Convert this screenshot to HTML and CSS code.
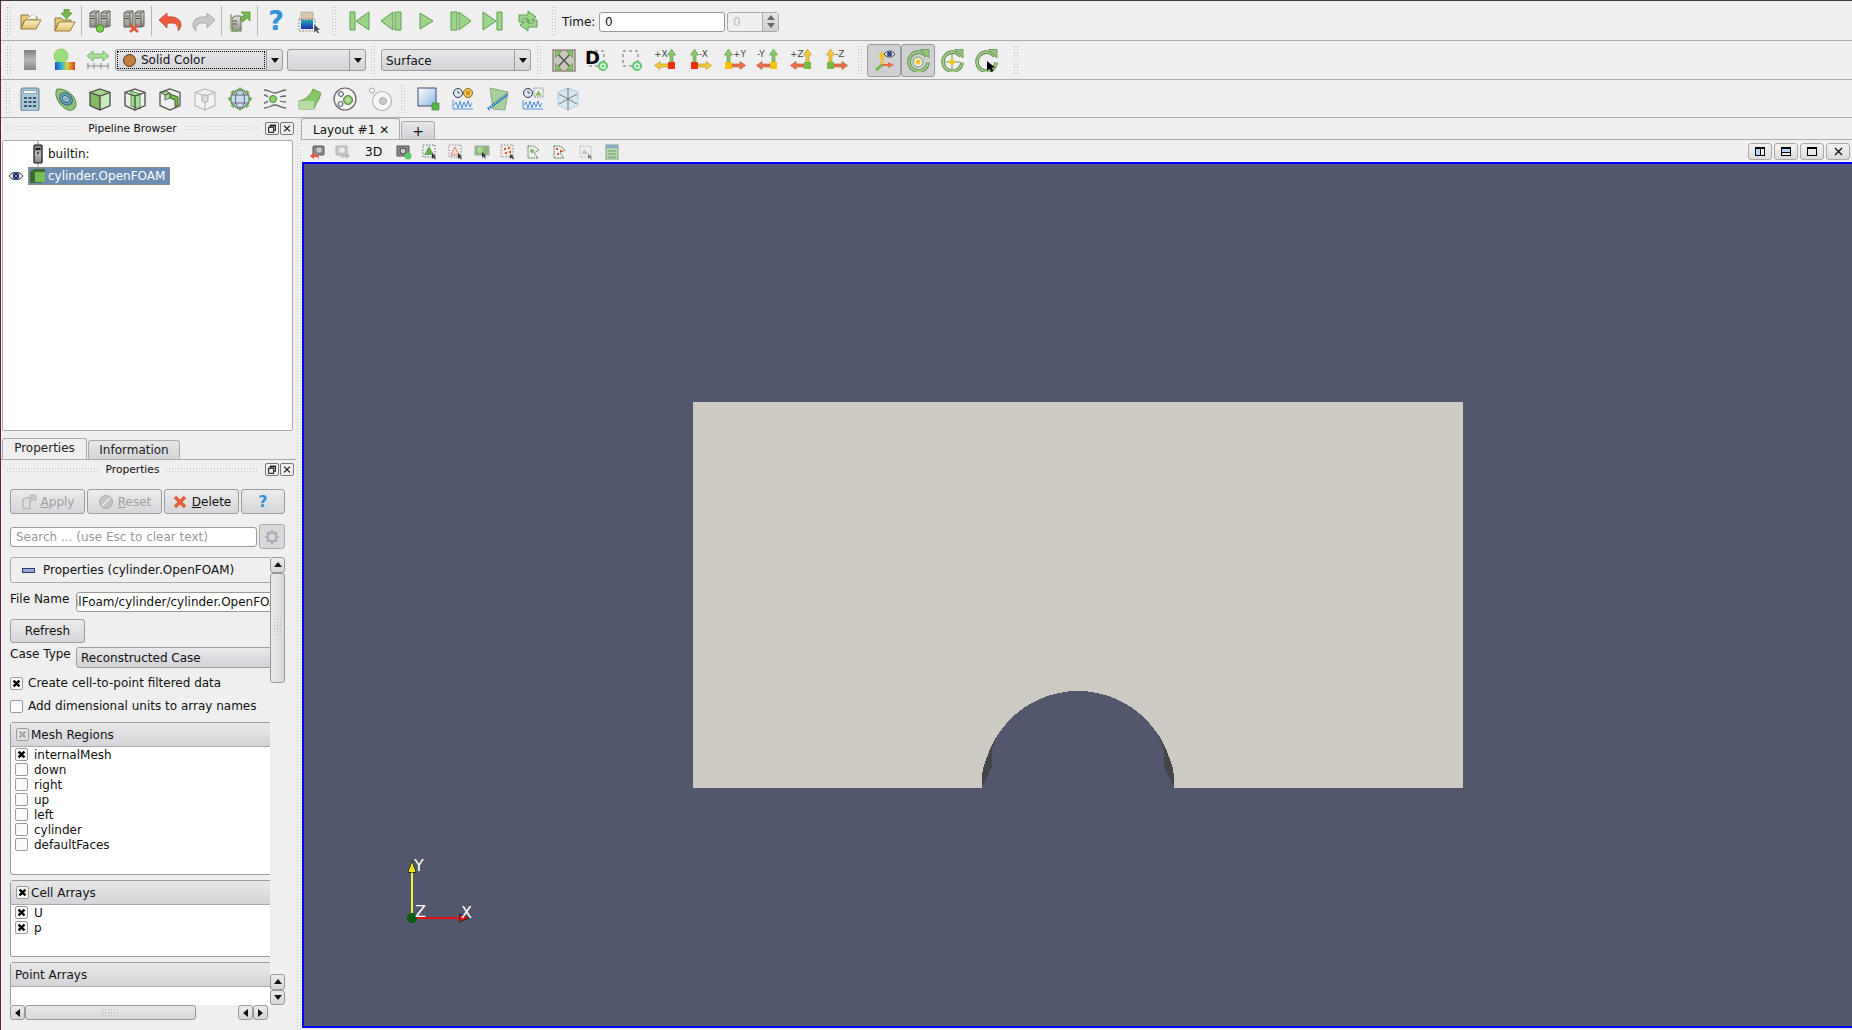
FILE: index.html
```html
<!DOCTYPE html>
<html lang="en">
<head>
  <meta charset="UTF-8">
  <title>ParaView</title>
  <link rel="stylesheet" href="styles.css">
</head>
<body>
<svg class="sprite" aria-hidden="true">
  <defs>
    <linearGradient id="gFolder" x1="0" y1="0" x2="0" y2="1"><stop offset="0" stop-color="#fdf0c4"/><stop offset="1" stop-color="#e6bf6a"/></linearGradient>
    <linearGradient id="gSrv" x1="0" y1="0" x2="0" y2="1"><stop offset="0" stop-color="#e4e4dc"/><stop offset="1" stop-color="#8f8f86"/></linearGradient>
    <linearGradient id="gSolid" x1="0" y1="0" x2="0" y2="1"><stop offset="0" stop-color="#808080"/><stop offset=".5" stop-color="#b8b8b8"/><stop offset="1" stop-color="#858585"/></linearGradient>
    <linearGradient id="gRain" x1="0" y1="0" x2="1" y2="0"><stop offset="0" stop-color="#2050c8"/><stop offset=".35" stop-color="#30b8d0"/><stop offset=".6" stop-color="#d8d040"/><stop offset="1" stop-color="#d84020"/></linearGradient>
    <linearGradient id="gCmap" x1="0" y1="0" x2="0" y2="1"><stop offset="0" stop-color="#20a8b0"/><stop offset="1" stop-color="#2030b0"/></linearGradient>
    <linearGradient id="gSel" x1="0" y1="0" x2="1" y2="1"><stop offset="0" stop-color="#ffffff"/><stop offset="1" stop-color="#8ab8e8"/></linearGradient>
    <radialGradient id="gBall"><stop offset="0" stop-color="#d8f0c8"/><stop offset="1" stop-color="#70b850"/></radialGradient>

    <symbol id="i-open" viewBox="0 0 24 24">
      <path d="M3 6h7l2 2h7v4H6l-3 8z" fill="#e6c678" stroke="#8a7440"/>
      <path d="M8 10l8-5 3 5z" fill="#fff" stroke="#aaa" stroke-width=".6"/>
      <path d="M3 20l4-9h16l-5 9z" fill="url(#gFolder)" stroke="#96803e"/>
    </symbol>
    <symbol id="i-load" viewBox="0 0 24 24">
      <path d="M3 9h6l2 2h8v3H6l-3 8z" fill="#e6c678" stroke="#8a7440"/>
      <path d="M3 22l4-9h16l-5 9z" fill="url(#gFolder)" stroke="#96803e"/>
      <path d="M12 0h5v4h3l-5.500 6L9 4h3z" fill="#78b850" stroke="#4e8a2a" stroke-width=".7"/>
    </symbol>
    <symbol id="i-servers" viewBox="0 0 24 24">
      <path d="M2 4l3-2h6v15l-3 1H2z" fill="url(#gSrv)" stroke="#5c5c54"/>
      <path d="M2 4h6l3-2M8 4v14" fill="none" stroke="#5c5c54"/>
      <path d="M13 4l3-2h6v15l-3 1h-6z" fill="url(#gSrv)" stroke="#5c5c54"/>
      <path d="M13 4h6l3-2M19 4v14" fill="none" stroke="#5c5c54"/>
      <path d="M3 7h4M3 9.500h4M14 7h4M14 9.500h4" stroke="#44443e" fill="none"/>
    </symbol>
    <symbol id="i-connect" viewBox="0 0 24 24">
      <use href="#i-servers"/>
      <circle cx="12" cy="19.500" r="3.800" fill="#7ccc50" stroke="#4c8a2c"/>
    </symbol>
    <symbol id="i-disconnect" viewBox="0 0 24 24">
      <use href="#i-servers"/>
      <path d="M8 16l8 7M16 16l-8 7" stroke="#e05a3a" stroke-width="2.600"/>
    </symbol>
    <symbol id="i-undo" viewBox="0 0 24 24">
      <path d="M1 11l8-7v4c8-1 14 2 14 8 0 2-1 4-3 6 1-5-2-8-6-8-2 0-3 0-5 1v4z" fill="#ee5a3e" stroke="#b84a30" stroke-width=".8"/>
    </symbol>
    <symbol id="i-redo" viewBox="0 0 24 24">
      <path d="M23 11l-8-7v4C7 7 1 10 1 16c0 2 1 4 3 6-1-5 2-8 6-8 2 0 3 0 5 1v4z" fill="#c8c8c8" stroke="#a0a0a0" stroke-width=".8"/>
    </symbol>
    <symbol id="i-srvgo" viewBox="0 0 24 24">
      <path d="M4 9l3-2h6v14l-3 1H4z" fill="url(#gSrv)" stroke="#66665e"/>
      <path d="M5 12h4M5 15h4" stroke="#55554e"/>
      <path d="M3 21V5M3 22h11" stroke="#86b070" stroke-width="1.500" fill="none"/>
      <path d="M13 3h9v9l-3-3-4 4-3-3 4-4z" fill="#78b850" stroke="#4e8a2a" stroke-width=".7"/>
    </symbol>
    <symbol id="i-cmap" viewBox="0 0 24 24">
      <rect x="3" y="3" width="12" height="8" fill="#d8c8b0" stroke="#a09080" stroke-width=".6"/>
      <rect x="3" y="11" width="12" height="9" fill="url(#gCmap)"/>
      <rect x="1" y="10" width="16" height="12" fill="none" stroke="#777" stroke-dasharray="1.500 1.500"/>
      <path d="M16 15v9l2-2 2 3 1.500-1-2-3h3z" fill="#445" stroke="#fff" stroke-width=".4"/>
    </symbol>

    <symbol id="i-first" viewBox="0 0 24 24">
      <path d="M4 3h5v18H4zM23 3v18L10 12z" fill="#9ed48a" stroke="#5a9e4a"/>
    </symbol>
    <symbol id="i-back" viewBox="0 0 24 24">
      <path d="M15 3h6v18h-6zM13 3v18L1 12z" fill="#9ed48a" stroke="#5a9e4a"/>
    </symbol>
    <symbol id="i-play" viewBox="0 0 24 24">
      <path d="M6 4l13 8-13 8z" fill="#9ed48a" stroke="#5a9e4a"/>
    </symbol>
    <symbol id="i-fwd" viewBox="0 0 24 24">
      <path d="M3 3h6v18H3zM11 3v18l12-9z" fill="#9ed48a" stroke="#5a9e4a"/>
    </symbol>
    <symbol id="i-last" viewBox="0 0 24 24">
      <path d="M20 3h-5v18h5zM1 3v18l13-9z" fill="#9ed48a" stroke="#5a9e4a"/>
    </symbol>
    <symbol id="i-loop" viewBox="0 0 24 24">
      <path d="M3 13V6h9V2l8 6-8 6v-4H7v3z" fill="#9ed48a" stroke="#5a9e4a"/>
      <path d="M21 11v7h-9v4l-8-6 8-6v4h5v-3z" fill="#9ed48a" stroke="#5a9e4a"/>
    </symbol>

    <symbol id="i-solid" viewBox="0 0 24 24">
      <rect x="6" y="2" width="12" height="20" fill="url(#gSolid)"/>
    </symbol>
    <symbol id="i-scalar" viewBox="0 0 24 24">
      <circle cx="9" cy="8" r="7" fill="#9ae07a" stroke="#78b858" stroke-width=".6"/>
      <rect x="3" y="14" width="20" height="8" fill="url(#gRain)"/>
    </symbol>
    <symbol id="i-rescale" viewBox="0 0 24 24">
      <path d="M1 8l6-5v3h10V3l6 5-6 5v-3H7v3z" fill="#a8e098" stroke="#6aa85a" stroke-width=".8"/>
      <path d="M1 18h22M2 15v6M8 15v6M15 15v6M22 15v6" stroke="#8a8a86" fill="none"/>
    </symbol>
    <symbol id="i-reset" viewBox="0 0 24 24">
      <rect x="1" y="2" width="22" height="21" fill="#c8c8bc" stroke="#8a8a80" stroke-width="1.500"/>
      <path d="M12 12.500L5 5M12 12.500L19 5M12 12.500L5 20M12 12.500L19 20" stroke="#555" stroke-width="1.500"/>
      <path d="M3.500 3.500h6l-6 6zM20.500 3.500h-6l6 6zM3.500 21.500h6l-6-6zM20.500 21.500h-6l6-6z" fill="#8cc860" stroke="#5a8a3a" stroke-width=".6"/>
    </symbol>
    <symbol id="i-zoomsel" viewBox="0 0 24 24">
      <rect x="3" y="3" width="15" height="15" fill="none" stroke="#666" stroke-dasharray="3 3"/>
      <circle cx="17" cy="18" r="5" fill="#5cc86c"/>
      <circle cx="17" cy="18" r="2.200" fill="none" stroke="#fff" stroke-width="1.200"/>
      <path d="M18.500 19.500l2 2" stroke="#fff"/>
    </symbol>
    <symbol id="i-zoomdata" viewBox="0 0 24 24">
      <use href="#i-zoomsel"/>
      <text x="-1" y="16" class="svg-d">D</text>
    </symbol>
    <symbol id="i-px" viewBox="0 0 24 24">
      <path d="M16 14V7h-2.500l4-6 4 6H19v7z" fill="#88c868" stroke="#5a9048" stroke-width=".6"/>
      <path d="M14 16H6v-2.500l-5.500 4 5.500 4V19h8z" fill="#f8c838" stroke="#b09030" stroke-width=".6"/>
      <rect x="14" y="14" width="7" height="7" fill="#ee3010"/>
      <text x="0" y="9" class="svg-ax">+X</text>
    </symbol>
    <symbol id="i-mx" viewBox="0 0 24 24">
      <path d="M5 14V7H2.500l4-6 4 6H8v7z" fill="#88c868" stroke="#5a9048" stroke-width=".6"/>
      <path d="M10 16h8v-2.500l5.500 4-5.500 4V19h-8z" fill="#f8c838" stroke="#b09030" stroke-width=".6"/>
      <rect x="3" y="14" width="7" height="7" fill="#ee3010"/>
      <text x="11" y="9" class="svg-ax">-X</text>
    </symbol>
    <symbol id="i-py" viewBox="0 0 24 24">
      <path d="M5 14V7H2.500l4-6 4 6H8v7z" fill="#88c868" stroke="#5a9048" stroke-width=".6"/>
      <path d="M10 16h8v-2.500l5.500 4-5.500 4V19h-8z" fill="#f07048" stroke="#b05030" stroke-width=".6"/>
      <rect x="3" y="14" width="7" height="7" fill="#f8c010"/>
      <text x="11" y="9" class="svg-ax">+Y</text>
    </symbol>
    <symbol id="i-my" viewBox="0 0 24 24">
      <path d="M16 14V7h-2.500l4-6 4 6H19v7z" fill="#88c868" stroke="#5a9048" stroke-width=".6"/>
      <path d="M14 16H6v-2.500l-5.500 4 5.500 4V19h8z" fill="#f07048" stroke="#b05030" stroke-width=".6"/>
      <rect x="14" y="14" width="7" height="7" fill="#f8c010"/>
      <text x="1" y="9" class="svg-ax">-Y</text>
    </symbol>
    <symbol id="i-pz" viewBox="0 0 24 24">
      <path d="M16 14V7h-2.500l4-6 4 6H19v7z" fill="#f8c838" stroke="#b09030" stroke-width=".6"/>
      <path d="M14 16H6v-2.500l-5.500 4 5.500 4V19h8z" fill="#f07048" stroke="#b05030" stroke-width=".6"/>
      <rect x="14" y="14" width="7" height="7" fill="#7cb848"/>
      <text x="0" y="9" class="svg-ax">+Z</text>
    </symbol>
    <symbol id="i-mz" viewBox="0 0 24 24">
      <path d="M5 14V7H2.500l4-6 4 6H8v7z" fill="#f8c838" stroke="#b09030" stroke-width=".6"/>
      <path d="M10 16h8v-2.500l5.500 4-5.500 4V19h-8z" fill="#f07048" stroke="#b05030" stroke-width=".6"/>
      <rect x="3" y="14" width="7" height="7" fill="#7cb848"/>
      <text x="11" y="9" class="svg-ax">-Z</text>
    </symbol>
    <symbol id="i-orient" viewBox="0 0 24 24">
      <path d="M10 17V8" stroke="#f0c030" stroke-width="3"/>
      <path d="M6 9l4-6 4 6z" fill="#f0c030"/>
      <path d="M10 17h7" stroke="#ee6a44" stroke-width="2"/>
      <path d="M16 14l6 3-6 3z" fill="#ee6a44"/>
      <path d="M10 17l-6 5" stroke="#78b850" stroke-width="3"/>
      <path d="M12 6c3-4 8-4 11 0-3 4-8 4-11 0z" fill="#dde" stroke="#445"/>
      <circle cx="17.500" cy="6" r="2.500" fill="#334a78"/>
    </symbol>
    <symbol id="i-ring" viewBox="0 0 24 24">
      <path d="M20.500 8.500a9.500 9.500 0 1 0 1.500 6" fill="none" stroke="#5f8a4a" stroke-width="3.600"/>
      <path d="M20.500 8.500a9.500 9.500 0 1 0 1.500 6" fill="none" stroke="#a4d08c" stroke-width="1.800"/>
      <path d="M14.500 1.500l8.500 0 0 8.500z" fill="#94c47c" stroke="#5a8a48" stroke-width=".7"/>
    </symbol>
    <symbol id="i-center" viewBox="0 0 24 24">
      <use href="#i-ring"/>
      <circle cx="12" cy="14" r="5" fill="#e8ece0" stroke="#7a9a68"/>
      <circle cx="12" cy="14" r="2.500" fill="#f8c820"/>
    </symbol>
    <symbol id="i-pick" viewBox="0 0 24 24">
      <use href="#i-ring"/>
      <path d="M12 6v16M4 14h16" stroke="#7a9a68"/>
      <circle cx="12" cy="14" r="2.800" fill="#f8c820"/>
    </symbol>
    <symbol id="i-rotate" viewBox="0 0 24 24">
      <use href="#i-ring"/>
      <path d="M13 13v10l2.500-2.500 2 3.500 2-1-2-3.500H21z" fill="#000"/>
    </symbol>

    <symbol id="i-calc" viewBox="0 0 24 24">
      <rect x="3" y="1" width="18" height="23" rx="2" fill="#a8c8d8" stroke="#5a7a90"/>
      <rect x="5.500" y="3.500" width="13" height="3" fill="#eef4f8" stroke="#6a8a98" stroke-width=".6"/>
      <path d="M6 10h3v2H6zM10.500 10h3v2h-3zM15 10h3v2h-3zM6 14h3v2H6zM10.500 14h3v2h-3zM15 14h3v2h-3zM6 18h3v2H6zM10.500 18h3v2h-3zM15 18h3v2h-3z" fill="#39566a"/>
    </symbol>
    <symbol id="i-contour" viewBox="0 0 24 24">
      <path d="M4 2c8-1 19 6 19 15 0 6-5 7-8 6C7 20 0 9 4 2z" fill="#8cc474" stroke="#5a8a48"/>
      <ellipse cx="13" cy="12" rx="7" ry="5.500" transform="rotate(40 13 12)" fill="#6aa4bc" stroke="#3a6478"/>
      <ellipse cx="13" cy="12" rx="4" ry="2.800" transform="rotate(40 13 12)" fill="#a8cce0" stroke="#3a6478"/>
      <ellipse cx="13" cy="12" rx="1.800" ry="1.100" transform="rotate(40 13 12)" fill="#6aa4bc"/>
    </symbol>
    <symbol id="i-wire" viewBox="0 0 24 24">
      <path d="M12 2l10 3.500v13L12 23 2 18.500v-13zM2 5.500L12 9l10-3.500M12 9v14" fill="none" stroke="#4a4a44" stroke-width="1.300"/>
    </symbol>
    <symbol id="i-clip" viewBox="0 0 24 24">
      <path d="M2 5.500L12 9v14L2 18.500z" fill="#84b864"/>
      <path d="M12 9l10-3.500v13L12 23z" fill="#c8ecc0"/>
      <path d="M12 2l10 3.500L12 9 2 5.500z" fill="#a4d48c"/>
      <use href="#i-wire"/>
    </symbol>
    <symbol id="i-slice" viewBox="0 0 24 24">
      <path d="M8 4l9 3v15l-9-3z" fill="#a4e094" stroke="#5a9a48"/>
      <use href="#i-wire"/>
    </symbol>
    <symbol id="i-extract" viewBox="0 0 24 24">
      <path d="M12 2l10 3.500v13L12 23 2 18.500v-13z" fill="none" stroke="#4a4a44" stroke-width="1.200"/>
      <path d="M12 7l8 3v8l-3 1.500V13l-5-2z" fill="#78b850" stroke="#3a6a28"/>
      <path d="M3 6l5-2 4 2-5 2zM7 8v5l5-2V6z" fill="#a8d890" stroke="#444" stroke-width=".7"/>
    </symbol>
    <symbol id="i-thresh" viewBox="0 0 24 24">
      <path d="M12 2l10 3.500v13L12 23 2 18.500v-13zM2 5.500L12 9l10-3.500M12 9v14" fill="#f2f2f2" stroke="#bbb" stroke-width="1.200"/>
      <path d="M9 9l3-1.500L15 9v5l-3 1.500L9 14z" fill="#ddd" stroke="#aaa"/>
    </symbol>
    <symbol id="i-glyph" viewBox="0 0 24 24">
      <circle cx="12" cy="12" r="9.500" fill="#c4dcec" stroke="#556"/>
      <ellipse cx="12" cy="12" rx="4.500" ry="9.500" fill="none" stroke="#667"/>
      <path d="M3 8h18M3 16h18" stroke="#667" fill="none"/>
      <path d="M12 0.500l2 2-2 2-2-2zM12 19.500l2 2-2 2-2-2zM2 10l2 2-2 2-2-2zM22 10l2 2-2 2-2-2zM5 3.500l2 2-2 2-2-2zM19 3.500l2 2-2 2-2-2zM5 16.500l2 2-2 2-2-2zM19 16.500l2 2-2 2-2-2z" fill="#78b850" stroke="#4a7a30" stroke-width=".5"/>
    </symbol>
    <symbol id="i-stream" viewBox="0 0 24 24">
      <path d="M1 3c6 0 7 3 11 3s6-3 11-3M1 21c6 0 7-3 11-3s6 3 11 3M1 8c2 0 3 1 4 2M1 16c2 0 3-1 4-2M17 10c2-1 3-1 6-1M17 14c2 1 3 1 6 1" fill="none" stroke="#666" stroke-width="1.300"/>
      <circle cx="10" cy="12" r="3.500" fill="#8cd46c" stroke="#4a8a30"/>
    </symbol>
    <symbol id="i-warp" viewBox="0 0 24 24">
      <path d="M1 14c6-1 11-5 14-12l8 4c-2 8-5 10-7 16H1z" fill="#88c868" stroke="#6aa04e"/>
      <path d="M1 14h15v8H1z" fill="#b8dca4"/>
    </symbol>
    <symbol id="i-group" viewBox="0 0 24 24">
      <circle cx="12" cy="12" r="11" fill="#f4f4f0" stroke="#666" stroke-width="1.200"/>
      <circle cx="15" cy="13" r="4.500" fill="url(#gBall)" stroke="#4a8a30"/>
      <circle cx="8" cy="7" r="2.500" fill="#e0e8f0" stroke="#556"/>
      <circle cx="7.500" cy="17" r="2.500" fill="#e0e8f0" stroke="#556"/>
    </symbol>
    <symbol id="i-groupoff" viewBox="0 0 24 24">
      <circle cx="14" cy="14" r="9.500" fill="#f6f6f6" stroke="#b8b8b8" stroke-width="1.200"/>
      <circle cx="15" cy="14" r="3.500" fill="#ccc" stroke="#aaa"/>
      <circle cx="4" cy="3.500" r="2.500" fill="#f6f6f6" stroke="#aaa"/>
    </symbol>
    <symbol id="i-selplot" viewBox="0 0 24 24">
      <rect x="2" y="1" width="18" height="18" fill="url(#gSel)" stroke="#446"/>
      <rect x="16" y="16" width="7" height="7" fill="#5cb04c" stroke="#3e8a30" stroke-dasharray="1.500 .8"/>
    </symbol>
    <symbol id="i-wave" viewBox="0 0 24 24">
      <path d="M2 13v9h20M3 18l2-3 2 6 2-7 2 7 2-6 2 5 2-6 2 6 2-4" fill="none" stroke="#4a90d8" stroke-width="1"/>
    </symbol>
    <symbol id="i-qplot" viewBox="0 0 24 24">
      <use href="#i-wave"/>
      <circle cx="7" cy="6" r="4.500" fill="#dce8f4" stroke="#334"/>
      <path d="M7 3.500V6h2" stroke="#334" fill="none" stroke-width=".8"/>
      <circle cx="17" cy="6" r="4.500" fill="#f4c850" stroke="#8a6a20"/>
      <rect x="15" y="4" width="4" height="4" fill="#d09020"/>
    </symbol>
    <symbol id="i-lineplot" viewBox="0 0 24 24">
      <path d="M4 1l18 4-3 18L7 22z" fill="#a8d09c" stroke="#88a888"/>
      <path d="M2 22L22 7" stroke="#2070d0" stroke-width="3" stroke-dasharray="1.500 1"/>
    </symbol>
    <symbol id="i-tplot" viewBox="0 0 24 24">
      <use href="#i-wave"/>
      <circle cx="7" cy="6" r="4.500" fill="#dce8f4" stroke="#334"/>
      <path d="M7 3.500V6h2" stroke="#334" fill="none" stroke-width=".8"/>
      <rect x="13" y="1" width="9" height="9" fill="none" stroke="#888" stroke-dasharray="1.500 1"/>
      <path d="M14.500 8.500l3-5 3 5z" fill="#78b850"/>
    </symbol>
    <symbol id="i-cube" viewBox="0 0 24 24">
      <path d="M12 1l10 4v13l-10 5-10-5V5z" fill="#d4e8f4" stroke="#b4c8d8"/>
      <path d="M12 1v22M3 7l18 10M21 7L3 17" stroke="#7a7a72"/>
    </symbol>

    <symbol id="i-eye" viewBox="0 0 16 12">
      <path d="M1 6c3-5 11-5 14 0-3 5-11 5-14 0z" fill="#e4e4ec" stroke="#334"/>
      <circle cx="8" cy="6" r="3.200" fill="#24386c"/>
      <circle cx="8" cy="6" r="1.200" fill="#889"/>
    </symbol>
    <symbol id="i-builtin" viewBox="0 0 20 27">
      <path d="M10 0v27" stroke="#888"/>
      <rect x="6" y="4" width="8" height="18" rx="1" fill="url(#gSolid)" stroke="#111" stroke-width="1.200"/>
      <path d="M7.500 7h5v2h-5z" fill="#222"/>
      <circle cx="10" cy="12" r="1" fill="#222"/>
    </symbol>
    <symbol id="i-source" viewBox="0 0 18 18">
      <path d="M1 5l4-3h11v11l-4 3H1z" fill="#3e6a32"/>
      <rect x="6" y="5" width="10" height="10" fill="#72c050"/>
    </symbol>
    <symbol id="i-float" viewBox="0 0 13 13">
      <rect x="4.500" y="2.500" width="6" height="6" fill="none" stroke="#111" stroke-width="1.200"/>
      <rect x="2.500" y="5" width="6" height="6" fill="#eee" stroke="#111" stroke-width="1.200"/>
      <path d="M4.500 2.500h6v1.500h-6z" fill="#111"/>
    </symbol>
    <symbol id="i-close" viewBox="0 0 13 13">
      <path d="M3 3l7 7M10 3l-7 7" stroke="#111" stroke-width="1.300"/>
    </symbol>
    <symbol id="i-x" viewBox="0 0 13 13">
      <path d="M3 3l7 7M10 3l-7 7" stroke="#000" stroke-width="2.800"/>
    </symbol>
    <symbol id="i-apply" viewBox="0 0 16 16">
      <path d="M2 5l7-2v12l-7-1z" fill="#ddd" stroke="#aaa"/>
      <path d="M9 1h6v6l-2-2-3 3-2-2 3-3z" fill="#ccc" stroke="#aaa" stroke-width=".6"/>
    </symbol>
    <symbol id="i-reset2" viewBox="0 0 16 16">
      <circle cx="8" cy="8" r="6.500" fill="#c4c4c4" stroke="#aaa"/>
      <path d="M4 12l8-8" stroke="#e8e8e8" stroke-width="1.500"/>
    </symbol>
    <symbol id="i-del" viewBox="0 0 16 16">
      <path d="M3 3l10 10M13 3L3 13" stroke="#e0603c" stroke-width="3.600"/>
    </symbol>
    <symbol id="i-gear" viewBox="0 0 16 16">
      <circle cx="8" cy="8" r="4.500" fill="none" stroke="#a8b0b8" stroke-width="2.400"/>
      <path d="M8 1v3M8 12v3M1 8h3M12 8h3M3 3l2 2M11 11l2 2M13 3l-2 2M5 11l-2 2" stroke="#a8b0b8" stroke-width="2"/>
    </symbol>

    <symbol id="v-undo" viewBox="0 0 16 16">
      <rect x="4" y="2" width="11" height="9" rx="1" fill="#889" stroke="#555"/>
      <circle cx="10" cy="6" r="2.500" fill="#ccc"/>
      <path d="M1 12l4-4v2c4 0 5 2 5 5-1-2-3-2-5-2v2z" fill="#e05a3c"/>
    </symbol>
    <symbol id="v-redo" viewBox="0 0 16 16">
      <rect x="1" y="2" width="11" height="9" rx="1" fill="#ccc" stroke="#aaa"/>
      <circle cx="7" cy="6" r="2.500" fill="#eee"/>
      <path d="M15 12l-4-4v2c-4 0-5 2-5 5 1-2 3-2 5-2v2z" fill="#bbb"/>
    </symbol>
    <symbol id="v-shot" viewBox="0 0 16 16">
      <rect x="1" y="2" width="12" height="10" fill="#8a8a82" stroke="#555"/>
      <circle cx="7" cy="7" r="3" fill="#ccc" stroke="#444"/>
      <circle cx="12" cy="12" r="3.500" fill="#5cc86c"/>
    </symbol>
    <symbol id="v-tri" viewBox="0 0 16 16">
      <rect x="1" y="1" width="12" height="12" fill="none" stroke="#666" stroke-dasharray="1.500 1.500"/>
      <path d="M7 2l5 9H2z" fill="#6aa850"/>
      <path d="M10 9v6l1.500-1.500 1.500 2 1-.8-1.500-2H14z" fill="#333"/>
    </symbol>
    <symbol id="v-trired" viewBox="0 0 16 16">
      <rect x="1" y="1" width="12" height="12" fill="none" stroke="#888" stroke-dasharray="1.500 1.500"/>
      <path d="M7 3l4 8H3z" fill="#f4e4d8" stroke="#e06040" stroke-width=".8"/>
      <path d="M10 9v6l1.500-1.500 1.500 2 1-.8-1.500-2H14z" fill="#333"/>
    </symbol>
    <symbol id="v-surf" viewBox="0 0 16 16">
      <rect x="1" y="2" width="14" height="9" fill="#8aba78" stroke="#aaa"/>
      <circle cx="6" cy="6" r="3" fill="#a8d898"/>
      <path d="M8 8v6l1.500-1.500 1.500 2 1-.8-1.500-2H12z" fill="#333"/>
    </symbol>
    <symbol id="v-pts" viewBox="0 0 16 16">
      <rect x="1" y="1" width="12" height="12" fill="#f0e8e0" stroke="#888" stroke-dasharray="1.500 1.500"/>
      <path d="M4 4h2v2H4zM8 3h2v2H8zM5 8h2v2H5zM9 7h2v2H9z" fill="#e05030"/>
      <path d="M10 10v5l1.500-1.500 1.500 2 1-.8-1.500-2H14z" fill="#333"/>
    </symbol>
    <symbol id="v-poly" viewBox="0 0 16 16">
      <path d="M2 2h6l5 4-5 3 4 5H2z" fill="#eee" stroke="#3a6a30" stroke-dasharray="1.500 1"/>
      <circle cx="6" cy="7" r="2" fill="#7ab858"/>
    </symbol>
    <symbol id="v-polyred" viewBox="0 0 16 16">
      <path d="M2 2h6l5 4-5 3 4 5H2z" fill="#eee" stroke="#3a6a30" stroke-dasharray="1.500 1"/>
      <path d="M4 4h2v2H4zM8 6h2v2H8zM5 9h2v2H5z" fill="#e05030"/>
    </symbol>
    <symbol id="v-gray" viewBox="0 0 16 16">
      <rect x="2" y="2" width="11" height="11" fill="#eee" stroke="#aaa" stroke-dasharray="1.500 1.500"/>
      <path d="M6 5l4 5H4z" fill="#b8c8b0"/>
      <path d="M10 10v5l1.500-1.500 1.500 2 1-.8-1.500-2H14z" fill="#777"/>
    </symbol>
    <symbol id="v-table" viewBox="0 0 16 16">
      <rect x="2" y="1" width="12" height="14" fill="#b8dcb0" stroke="#8a9a8a"/>
      <path d="M2 1h12v3H2z" fill="#88aac0"/>
      <path d="M4 7h8M4 10h8M4 13h8" stroke="#6a9a60"/>
    </symbol>
  </defs>
</svg>

<div class="app">
  <div class="bar bar-1">
    <span class="grip grip-first"></span>
    <span class="tb"><svg class="ic"><use href="#i-open"/></svg></span>
    <span class="tb"><svg class="ic"><use href="#i-load"/></svg></span>
    <span class="sep"></span>
    <span class="tb"><svg class="ic"><use href="#i-connect"/></svg></span>
    <span class="tb"><svg class="ic"><use href="#i-disconnect"/></svg></span>
    <span class="sep"></span>
    <span class="tb"><svg class="ic"><use href="#i-undo"/></svg></span>
    <span class="tb"><svg class="ic"><use href="#i-redo"/></svg></span>
    <span class="sep"></span>
    <span class="tb"><svg class="ic"><use href="#i-srvgo"/></svg></span>
    <span class="sep"></span>
    <span class="tb"><span class="help-glyph">?</span></span>
    <span class="tb"><svg class="ic"><use href="#i-cmap"/></svg></span>
    <span class="grip grip-mid"></span>
    <span class="tb"><svg class="ic"><use href="#i-first"/></svg></span>
    <span class="tb"><svg class="ic"><use href="#i-back"/></svg></span>
    <span class="tb"><svg class="ic"><use href="#i-play"/></svg></span>
    <span class="tb"><svg class="ic"><use href="#i-fwd"/></svg></span>
    <span class="tb"><svg class="ic"><use href="#i-last"/></svg></span>
    <span class="tb"><svg class="ic"><use href="#i-loop"/></svg></span>
    <span class="grip grip-time"></span>
    <span class="time-label">Time:</span>
    <span class="field time-field">0</span>
    <span class="spin">
      <span class="spin-value">0</span>
      <span class="spin-arrows"><i class="tri-up"></i><i class="tri-down"></i></span>
    </span>
  </div>

  <div class="bar bar-2">
    <span class="grip grip-first"></span>
    <span class="tb"><svg class="ic"><use href="#i-solid"/></svg></span>
    <span class="tb"><svg class="ic"><use href="#i-scalar"/></svg></span>
    <span class="tb"><svg class="ic"><use href="#i-rescale"/></svg></span>
    <span class="combo combo-color">
      <span class="combo-text focus"><i class="swatch"></i>Solid Color</span>
      <span class="combo-arrow"><i class="tri-down dark"></i></span>
    </span>
    <span class="combo combo-comp">
      <span class="combo-text"></span>
      <span class="combo-arrow"><i class="tri-down dark"></i></span>
    </span>
    <span class="grip grip-combo"></span>
    <span class="combo combo-rep">
      <span class="combo-text">Surface</span>
      <span class="combo-arrow"><i class="tri-down dark"></i></span>
    </span>
    <span class="grip grip-cam"></span>
    <span class="tb"><svg class="ic"><use href="#i-reset"/></svg></span>
    <span class="tb"><svg class="ic"><use href="#i-zoomdata"/></svg></span>
    <span class="tb"><svg class="ic"><use href="#i-zoomsel"/></svg></span>
    <span class="tb"><svg class="ic"><use href="#i-px"/></svg></span>
    <span class="tb"><svg class="ic"><use href="#i-mx"/></svg></span>
    <span class="tb"><svg class="ic"><use href="#i-py"/></svg></span>
    <span class="tb"><svg class="ic"><use href="#i-my"/></svg></span>
    <span class="tb"><svg class="ic"><use href="#i-pz"/></svg></span>
    <span class="tb"><svg class="ic"><use href="#i-mz"/></svg></span>
    <span class="grip grip-tog"></span>
    <span class="tb on"><svg class="ic"><use href="#i-orient"/></svg></span>
    <span class="tb on"><svg class="ic"><use href="#i-center"/></svg></span>
    <span class="tb"><svg class="ic"><use href="#i-pick"/></svg></span>
    <span class="tb"><svg class="ic"><use href="#i-rotate"/></svg></span>
    <span class="grip grip-end"></span>
  </div>

  <div class="bar bar-3">
    <span class="grip grip-first"></span>
    <span class="tb"><svg class="ic"><use href="#i-calc"/></svg></span>
    <span class="tb"><svg class="ic"><use href="#i-contour"/></svg></span>
    <span class="tb"><svg class="ic"><use href="#i-clip"/></svg></span>
    <span class="tb"><svg class="ic"><use href="#i-slice"/></svg></span>
    <span class="tb"><svg class="ic"><use href="#i-extract"/></svg></span>
    <span class="tb"><svg class="ic"><use href="#i-thresh"/></svg></span>
    <span class="tb"><svg class="ic"><use href="#i-glyph"/></svg></span>
    <span class="tb"><svg class="ic"><use href="#i-stream"/></svg></span>
    <span class="tb"><svg class="ic"><use href="#i-warp"/></svg></span>
    <span class="tb"><svg class="ic"><use href="#i-group"/></svg></span>
    <span class="tb"><svg class="ic"><use href="#i-groupoff"/></svg></span>
    <span class="grip grip-mid"></span>
    <span class="tb"><svg class="ic"><use href="#i-selplot"/></svg></span>
    <span class="tb"><svg class="ic"><use href="#i-qplot"/></svg></span>
    <span class="tb"><svg class="ic"><use href="#i-lineplot"/></svg></span>
    <span class="tb"><svg class="ic"><use href="#i-tplot"/></svg></span>
    <span class="tb"><svg class="ic"><use href="#i-cube"/></svg></span>
  </div>

  <div class="main">
    <div class="left">
      <div class="dock-title">
        <span class="title-grip"></span>
        <span class="title-text">Pipeline Browser</span>
        <span class="title-grip"></span>
        <span class="mini"><svg><use href="#i-float"/></svg></span>
        <span class="mini"><svg><use href="#i-close"/></svg></span>
      </div>
      <div class="tree">
        <div class="tree-row">
          <span class="eye-slot"></span>
          <svg class="tree-server"><use href="#i-builtin"/></svg>
          <span>builtin:</span>
        </div>
        <div class="tree-row tree-row-source">
          <span class="eye-slot"><svg class="eye"><use href="#i-eye"/></svg></span>
          <span class="selected"><svg class="source-ic"><use href="#i-source"/></svg>cylinder.OpenFOAM</span>
        </div>
      </div>
      <div class="split-h"></div>
      <div class="tabs">
        <span class="tab tab-on">Properties</span>
        <span class="tab">Information</span>
      </div>
      <div class="dock-title dock-title-props">
        <span class="title-grip"></span>
        <span class="title-text">Properties</span>
        <span class="title-grip"></span>
        <span class="mini"><svg><use href="#i-float"/></svg></span>
        <span class="mini"><svg><use href="#i-close"/></svg></span>
      </div>
      <div class="props">
        <div class="action-row">
          <span class="btn btn-wide off"><svg><use href="#i-apply"/></svg><span><u>A</u>pply</span></span>
          <span class="btn btn-wide off"><svg><use href="#i-reset2"/></svg><span><u>R</u>eset</span></span>
          <span class="btn btn-wide"><svg><use href="#i-del"/></svg><span><u>D</u>elete</span></span>
          <span class="btn btn-help"><span class="help-small">?</span></span>
        </div>
        <div class="search-row">
          <span class="field search">Search ... (use Esc to clear text)</span>
          <span class="gear"><svg><use href="#i-gear"/></svg></span>
        </div>
        <div class="scroll-wrap">
          <div class="scroll-body">
            <div class="prop-head"><i class="dash"></i>Properties (cylinder.OpenFOAM)</div>
            <div class="prop-row prop-file">
              <span class="prop-label">File Name</span>
              <span class="field file-field"><span class="file-text">ilFoam/cylinder/cylinder.OpenFOAM</span></span>
            </div>
            <span class="btn btn-refresh">Refresh</span>
            <div class="prop-row prop-case">
              <span class="prop-label">Case Type</span>
              <span class="combo combo-case"><span class="combo-text">Reconstructed Case</span></span>
            </div>
            <div class="check-row check-a"><span class="cb"><svg><use href="#i-x"/></svg></span>Create cell-to-point filtered data</div>
            <div class="check-row check-b"><span class="cb"></span>Add dimensional units to array names</div>

            <div class="group group-mesh">
              <div class="group-head"><span class="cb cb-gray"><svg><use href="#i-x"/></svg></span>Mesh Regions</div>
              <div class="item"><span class="cb"><svg><use href="#i-x"/></svg></span>internalMesh</div>
              <div class="item"><span class="cb"></span>down</div>
              <div class="item"><span class="cb"></span>right</div>
              <div class="item"><span class="cb"></span>up</div>
              <div class="item"><span class="cb"></span>left</div>
              <div class="item"><span class="cb"></span>cylinder</div>
              <div class="item"><span class="cb"></span>defaultFaces</div>
            </div>
            <div class="group group-cell">
              <div class="group-head"><span class="cb"><svg><use href="#i-x"/></svg></span>Cell Arrays</div>
              <div class="item"><span class="cb"><svg><use href="#i-x"/></svg></span>U</div>
              <div class="item"><span class="cb"><svg><use href="#i-x"/></svg></span>p</div>
            </div>
            <div class="group group-point">
              <div class="group-head group-head-plain">Point Arrays</div>
            </div>
          </div>
          <div class="vscroll">
            <span class="sb-btn"><i class="tri-up dark"></i></span>
            <span class="sb-thumb"><i class="sb-dots"></i></span>
            <span class="sb-track"></span>
            <span class="sb-btn"><i class="tri-up dark"></i></span>
            <span class="sb-btn"><i class="tri-down dark"></i></span>
          </div>
        </div>
        <div class="hscroll">
          <span class="sb-btn"><i class="tri-left"></i></span>
          <span class="sb-thumb-h"><i class="sb-dots sb-dots-h"></i></span>
          <span class="sb-track"></span>
          <span class="sb-btn"><i class="tri-left"></i></span>
          <span class="sb-btn"><i class="tri-right"></i></span>
        </div>
      </div>
    </div>
    <div class="split-v"></div>

    <div class="right">
      <div class="view-tabs">
        <span class="vtab vtab-on">Layout #1<span class="vtab-x">✕</span></span>
        <span class="vtab vtab-add">+</span>
      </div>
      <div class="view-bar">
        <span class="vb"><svg><use href="#v-undo"/></svg></span>
        <span class="vb"><svg><use href="#v-redo"/></svg></span>
        <span class="vb-3d">3D</span>
        <span class="vb"><svg><use href="#v-shot"/></svg></span>
        <span class="vb"><svg><use href="#v-tri"/></svg></span>
        <span class="vb"><svg><use href="#v-trired"/></svg></span>
        <span class="vb"><svg><use href="#v-surf"/></svg></span>
        <span class="vb"><svg><use href="#v-pts"/></svg></span>
        <span class="vb"><svg><use href="#v-poly"/></svg></span>
        <span class="vb"><svg><use href="#v-polyred"/></svg></span>
        <span class="vb"><svg><use href="#v-gray"/></svg></span>
        <span class="vb"><svg><use href="#v-table"/></svg></span>
        <span class="view-btns">
          <span class="vbtn"><i class="pane pane-h"></i></span>
          <span class="vbtn"><i class="pane pane-v"></i></span>
          <span class="vbtn"><i class="pane"></i></span>
          <span class="vbtn"><svg><use href="#i-close"/></svg></span>
        </span>
      </div>
      <div class="viewport">
        <svg class="scene" viewBox="304 164 1550 866">
          <path class="geo" d="M693 402H1463V788H1174A96 97 0 0 0 982 788H693z"/>
          <path class="shade" d="M982 777L983 768 987 757 992 745 997 735 992 750 992 767 982 787z"/>
          <path class="shade" d="M1174 777L1173 768 1169 757 1164 745 1159 735 1164 750 1164 767 1174 787z"/>
          <path d="M412 918V870" stroke="#f0f040" stroke-width="1.500"/>
          <path d="M412 918H460" stroke="#e01010" stroke-width="1.500"/>
          <path d="M408 872L412 861 416 872z" fill="#e4e020" stroke="#111" stroke-width=".6"/>
          <path d="M459 914L469 918 459 922z" fill="#e01010" stroke="#111" stroke-width=".6"/>
          <circle cx="412" cy="918" r="5" fill="#0b5c10"/>
          <text class="axis-label" x="414" y="871">Y</text>
          <text class="axis-label" x="415" y="917">Z</text>
          <text class="axis-label" x="461" y="918">X</text>
        </svg>
      </div>
    </div>
  </div>
</div>
</body>
</html>
```

FILE: styles.css
```css
html, body {
  margin: 0;
  padding: 0;
  height: 100%;
  overflow: hidden;
}
body {
  font-family: "DejaVu Sans", sans-serif;
  font-size: 12px;
  color: #111;
  background-color: #efefef;
}
i {
  display: block;
  font-style: normal;
}
.sprite {
  display: block;
  width: 0;
  height: 0;
}
.svg-d {
  font: bold 18px "DejaVu Sans", sans-serif;
  fill: #000;
}
.svg-ax {
  font: 9px "DejaVu Sans", sans-serif;
  fill: #444;
}

.app {
  box-sizing: border-box;
  width: 1852px;
  height: 1030px;
  display: flex;
  flex-direction: column;
  overflow: hidden;
  border-top: 1px solid #3c3b37;
  border-left: 1px solid #5e2750;
}

/* toolbars */
.bar {
  flex: none;
  box-sizing: border-box;
  display: flex;
  align-items: center;
  border-bottom: 1px solid #ababab;
}
.bar-1 { height: 40px; }
.bar-2 { height: 39px; }
.bar-3 { height: 38px; }
.tb {
  flex: none;
  box-sizing: border-box;
  width: 34px;
  height: 33px;
  display: flex;
  align-items: center;
  justify-content: center;
}
.bar-3 .tb { width: 35px; }
.tb.on {
  background-color: #cfd0d4;
  border: 1px solid #9a9a9a;
  border-radius: 3px;
}
.ic {
  width: 24px;
  height: 24px;
}
.sep {
  flex: none;
  width: 1px;
  height: 30px;
  margin-right: 1px;
  background-color: #b5b5b5;
}
.grip {
  flex: none;
  width: 6px;
  height: 30px;
  background-image: radial-gradient(#bdbdbd 1px, transparent 1px);
  background-size: 3px 3px;
}
.grip-first { margin: 0 1px 0 5px; }
.grip-mid { margin: 0 4px; }
.grip-time { margin: 0 5px 0 6px; }
.grip-combo { margin: 0 5px 0 4px; }
.grip-cam { margin: 0 5px 0 5px; }
.grip-tog { margin: 0 4px; }
.grip-end { margin: 0 0 0 10px; }
.bar-3 .grip-first { margin: 0 1px 0 4px; }
.bar-3 .grip-mid { margin: 0 4px 0 3px; }
.help-glyph {
  font-size: 27px;
  font-weight: bold;
  color: #2f93dc;
}

.time-label {
  width: 37px;
  margin-top: 2px;
}
.field {
  box-sizing: border-box;
  display: flex;
  align-items: center;
  background-color: #fff;
  border: 1px solid #999;
  border-radius: 3px;
  overflow: hidden;
  white-space: nowrap;
}
.time-field {
  width: 126px;
  height: 20px;
  margin-top: 2px;
  padding-left: 5px;
}
.spin {
  box-sizing: border-box;
  display: flex;
  width: 52px;
  height: 20px;
  margin: 2px 0 0 2px;
  border: 1px solid #aaa;
  border-radius: 3px;
}
.spin-value {
  flex: 1;
  padding-left: 5px;
  color: #bbb;
  line-height: 18px;
}
.spin-arrows {
  width: 15px;
  display: flex;
  flex-direction: column;
  justify-content: space-evenly;
  align-items: center;
  background: linear-gradient(#e6e6ea, #cfcfd4);
  border-left: 1px solid #aaa;
}

/* triangles */
.tri-up, .tri-down {
  width: 0;
  height: 0;
  border-left: 4px solid transparent;
  border-right: 4px solid transparent;
}
.tri-up { border-bottom: 5px solid #6a6a6a; }
.tri-down { border-top: 5px solid #6a6a6a; }
.tri-up.dark { border-bottom-color: #111; }
.tri-down.dark { border-top-color: #111; }
.tri-left, .tri-right {
  width: 0;
  height: 0;
  border-top: 4px solid transparent;
  border-bottom: 4px solid transparent;
}
.tri-left { border-right: 5px solid #111; }
.tri-right { border-left: 5px solid #111; }

/* combos */
.combo {
  flex: none;
  box-sizing: border-box;
  display: flex;
  height: 22px;
  border: 1px solid #9c9c9c;
  border-radius: 3px;
  background: linear-gradient(#e9e9ec, #d2d2d7);
}
.combo-text {
  flex: 1;
  display: flex;
  align-items: center;
  padding-left: 4px;
  white-space: nowrap;
}
.combo-text.focus {
  margin: 1px;
  padding-left: 5px;
  border: 1px dotted #000;
}
.combo-arrow {
  width: 15px;
  display: flex;
  align-items: center;
  justify-content: center;
  border-left: 1px solid #9c9c9c;
}
.combo-color { width: 168px; }
.combo-comp { width: 79px; margin-left: 4px; }
.combo-rep { width: 150px; }
.combo-rep .combo-text { padding-top: 1px; }
.swatch {
  box-sizing: border-box;
  width: 13px;
  height: 13px;
  margin-right: 5px;
  border-radius: 50%;
  background-color: #c47f3e;
  border: 1px solid #4d3a2a;
}

/* main area */
.main {
  flex: 1;
  display: flex;
  min-height: 0;
}
.left {
  flex: none;
  width: 295px;
  display: flex;
  flex-direction: column;
}
.split-v {
  flex: none;
  width: 5px;
  background-image: radial-gradient(#cfcfcf 1px, transparent 1px);
  background-size: 3px 3px;
}
.dock-title {
  flex: none;
  box-sizing: border-box;
  display: flex;
  align-items: center;
  gap: 6px;
  height: 22px;
  padding: 0 2px 2px 5px;
  font-size: 10.67px;
}
.dock-title .mini + .mini { margin-left: -5px; }
.dock-title-props { height: 19px; padding-bottom: 0; }
.title-text { flex: none; }
.title-grip {
  flex: 1;
  height: 6px;
  background-image: radial-gradient(#c6c6c6 1px, transparent 1px);
  background-size: 3px 3px;
}
.mini {
  flex: none;
  box-sizing: border-box;
  width: 14px;
  height: 13px;
  border: 1px solid #777;
  border-radius: 2px;
  background-color: #f0f0f0;
}
.mini svg {
  display: block;
  width: 12px;
  height: 11px;
}
.tree {
  flex: none;
  box-sizing: border-box;
  width: 291px;
  height: 291px;
  margin-left: 1px;
  padding-top: 3px;
  background-color: #fff;
  border: 1px solid #aaa;
  border-radius: 2px;
}
.tree-row {
  display: flex;
  align-items: center;
  height: 20px;
}
.tree-row-source {
  height: 18px;
  margin-top: 3px;
}
.eye-slot {
  flex: none;
  width: 25px;
  display: flex;
  justify-content: center;
}
.eye {
  width: 16px;
  height: 12px;
}
.tree-server {
  flex: none;
  width: 20px;
  height: 27px;
}
.selected {
  box-sizing: border-box;
  display: flex;
  align-items: center;
  width: 142px;
  height: 18px;
  color: #fff;
  background-color: #6b8cb3;
  border: 1px dotted #a08a68;
}
.source-ic {
  flex: none;
  width: 18px;
  height: 18px;
  margin-right: 1px;
}
.split-h {
  flex: none;
  height: 8px;
}
.tabs {
  flex: none;
  display: flex;
  align-items: flex-end;
  height: 21px;
  box-sizing: border-box;
  padding-left: 1px;
  border-bottom: 1px solid #aaa;
}
.tab {
  box-sizing: border-box;
  width: 92px;
  height: 19px;
  margin-left: 1px;
  text-align: center;
  line-height: 19px;
  color: #222;
  background: linear-gradient(#e8e8ea, #d5d5d9);
  border: 1px solid #aaa;
  border-bottom: none;
  border-radius: 3px 3px 0 0;
}
.tab-on {
  width: 85px;
  height: 21px;
  margin-left: 0;
  line-height: 19px;
  background: #efefef;
}

/* properties panel */
.props {
  flex: 1;
  display: flex;
  flex-direction: column;
  min-height: 0;
  padding: 10px 0 0 9px;
}
.action-row {
  flex: none;
  display: flex;
  gap: 2px;
}
.btn {
  box-sizing: border-box;
  display: flex;
  align-items: center;
  justify-content: center;
  height: 25px;
  border: 1px solid #9c9c9c;
  border-radius: 3px;
  background: linear-gradient(#ececee, #d6d6da);
}
.btn svg {
  width: 16px;
  height: 16px;
  margin-right: 4px;
}
.btn-wide { width: 75px; }
.btn-help { width: 44px; }
.btn.off { color: #a0a0a0; }
.help-small {
  font-size: 16px;
  font-weight: bold;
  color: #2f93dc;
}
.search-row {
  flex: none;
  display: flex;
  align-items: center;
  gap: 2px;
  margin-top: 10px;
}
.search {
  width: 247px;
  height: 20px;
  padding-left: 5px;
  color: #999;
}
.gear {
  box-sizing: border-box;
  width: 26px;
  height: 25px;
  display: flex;
  align-items: center;
  justify-content: center;
  border: 1px solid #aaa;
  border-radius: 3px;
  background-color: #d9d9dc;
}
.gear svg {
  width: 16px;
  height: 16px;
}
.scroll-wrap {
  flex: none;
  display: flex;
  height: 448px;
  margin-top: 8px;
  width: 275px;
}
.scroll-body {
  flex: none;
  width: 260px;
  overflow: hidden;
}
.prop-head {
  box-sizing: border-box;
  display: flex;
  align-items: center;
  width: 270px;
  height: 26px;
  padding-left: 11px;
  border: 1px solid #aaa;
  border-radius: 3px;
}
.dash {
  box-sizing: border-box;
  width: 13px;
  height: 5px;
  margin-right: 8px;
  background-color: #9aa8d8;
  border: 1px solid #2a3a70;
}
.prop-row {
  display: flex;
  align-items: flex-start;
}
.prop-file { margin-top: 9px; }
.prop-case { margin-top: 4px; }
.prop-label {
  flex: none;
  width: 66px;
  white-space: nowrap;
}
.file-field {
  flex: none;
  width: 200px;
  height: 20px;
  padding-left: 1px;
}
.file-text { margin-left: -3px; }
.combo-case { width: 200px; height: 21px; }
.btn-refresh {
  width: 75px;
  height: 24px;
  margin-top: 7px;
}
.check-row {
  display: flex;
  align-items: center;
  height: 20px;
  white-space: nowrap;
}
.check-a { margin-top: 5px; }
.check-b { margin-top: 3px; }
.cb {
  flex: none;
  box-sizing: border-box;
  display: block;
  width: 13px;
  height: 13px;
  margin-right: 5px;
  background-color: #fafafa;
  border: 1px solid #9a9a9a;
  border-radius: 2px;
}
.cb svg {
  display: block;
  width: 11px;
  height: 11px;
}
.cb-gray {
  background-color: #e4e4e4;
}
.cb-gray svg {
  opacity: .25;
}
.group {
  box-sizing: border-box;
  width: 270px;
  background-color: #fff;
  border: 1px solid #9a9a9a;
  border-radius: 3px;
}
.group-mesh { height: 153px; margin-top: 6px; }
.group-cell { height: 77px; margin-top: 5px; }
.group-point { height: 60px; margin-top: 5px; }
.group-head {
  box-sizing: border-box;
  display: flex;
  align-items: center;
  height: 24px;
  padding-left: 5px;
  border-bottom: 1px solid #aaa;
  background: linear-gradient(#e8e8ea, #d5d5d9);
}
.group-head .cb { margin-right: 2px; }
.group-head-plain { padding-left: 4px; }
.item {
  display: flex;
  align-items: center;
  height: 15px;
  padding-left: 4px;
}
.item .cb { margin-right: 6px; }

/* scrollbars */
.vscroll {
  flex: none;
  width: 15px;
  display: flex;
  flex-direction: column;
}
.sb-btn {
  flex: none;
  box-sizing: border-box;
  width: 15px;
  height: 15.5px;
  display: flex;
  align-items: center;
  justify-content: center;
  border: 1px solid #999;
  border-radius: 3px;
  background: linear-gradient(#ececee, #d6d6da);
}
.hscroll .sb-btn { height: 15px; }
.sb-thumb {
  flex: none;
  box-sizing: border-box;
  height: 110px;
  display: flex;
  align-items: center;
  justify-content: center;
  border: 1px solid #999;
  border-radius: 3px;
  background: linear-gradient(90deg, #e9e9ec, #d8d8dc);
}
.sb-track {
  flex: 1;
  background-image: radial-gradient(#d8d8d8 .5px, transparent .7px);
  background-size: 2px 2px;
}
.sb-dots {
  width: 10px;
  height: 19px;
  background-image: radial-gradient(#bbb 1px, transparent 1px);
  background-size: 3px 3px;
}
.sb-dots-h {
  width: 19px;
  height: 10px;
}
.hscroll {
  flex: none;
  display: flex;
  width: 258px;
  height: 15px;
}
.sb-thumb-h {
  flex: none;
  box-sizing: border-box;
  width: 171px;
  display: flex;
  align-items: center;
  justify-content: center;
  border: 1px solid #999;
  border-radius: 3px;
  background: linear-gradient(#e9e9ec, #d8d8dc);
}

/* render view */
.right {
  flex: 1;
  display: flex;
  flex-direction: column;
  min-width: 0;
  padding-bottom: 2px;
}
.view-tabs {
  flex: none;
  box-sizing: border-box;
  display: flex;
  align-items: flex-end;
  height: 22px;
  border-bottom: 1px solid #aaa;
}
.vtab {
  box-sizing: border-box;
  height: 18px;
  line-height: 18px;
  border: 1px solid #aaa;
  border-bottom: none;
  border-radius: 3px 3px 0 0;
}
.vtab-on {
  display: flex;
  align-items: center;
  width: 99px;
  height: 21px;
  padding: 1px 0 0 11px;
  background-color: #efefef;
}
.vtab-x {
  margin-left: 4px;
  font-size: 12px;
}
.vtab-add {
  width: 34px;
  margin-left: 1px;
  text-align: center;
  font-size: 14px;
  background: linear-gradient(#e8e8ea, #d0d0d6);
}
.view-bar {
  flex: none;
  box-sizing: border-box;
  display: flex;
  align-items: center;
  height: 22px;
  padding: 1px 2px 0 3px;
}
.vb {
  flex: none;
  width: 26px;
  height: 16px;
  display: flex;
  justify-content: center;
}
.vb svg {
  width: 16px;
  height: 16px;
}
.vb-3d {
  flex: none;
  width: 35px;
  text-align: center;
  font-size: 12.5px;
}
.view-btns {
  display: flex;
  gap: 2px;
  margin: -1px 0 0 auto;
}
.vbtn {
  box-sizing: border-box;
  width: 24px;
  height: 17px;
  display: flex;
  align-items: center;
  justify-content: center;
  border: 1px solid #aaa;
  border-radius: 3px;
  background: linear-gradient(#f2f2f2, #dcdcdc);
}
.vbtn svg {
  width: 13px;
  height: 13px;
}
.pane {
  box-sizing: border-box;
  width: 10px;
  height: 9px;
  border: 1px solid #000;
  border-top-width: 2px;
}
.pane-h {
  background: linear-gradient(90deg, #bcd4ee 50%, #000 50%, #000 60%, #e8f0f8 60%);
}
.pane-v {
  background: linear-gradient(#bcd4ee 45%, #000 45%, #000 60%, #e8f0f8 60%);
}
.viewport {
  flex: 1;
  box-sizing: border-box;
  margin: 0 -2px 0 1px;
  background-color: #52576e;
  border: 2px solid #0000ff;
  overflow: hidden;
}
.scene {
  display: block;
  width: 1550px;
  height: 866px;
  shape-rendering: crispEdges;
}
.geo { fill: #cdcac3; }
.shade { fill: #444549; }
.axis-label {
  font: 16px "DejaVu Sans", sans-serif;
  fill: #fff;
}
```
